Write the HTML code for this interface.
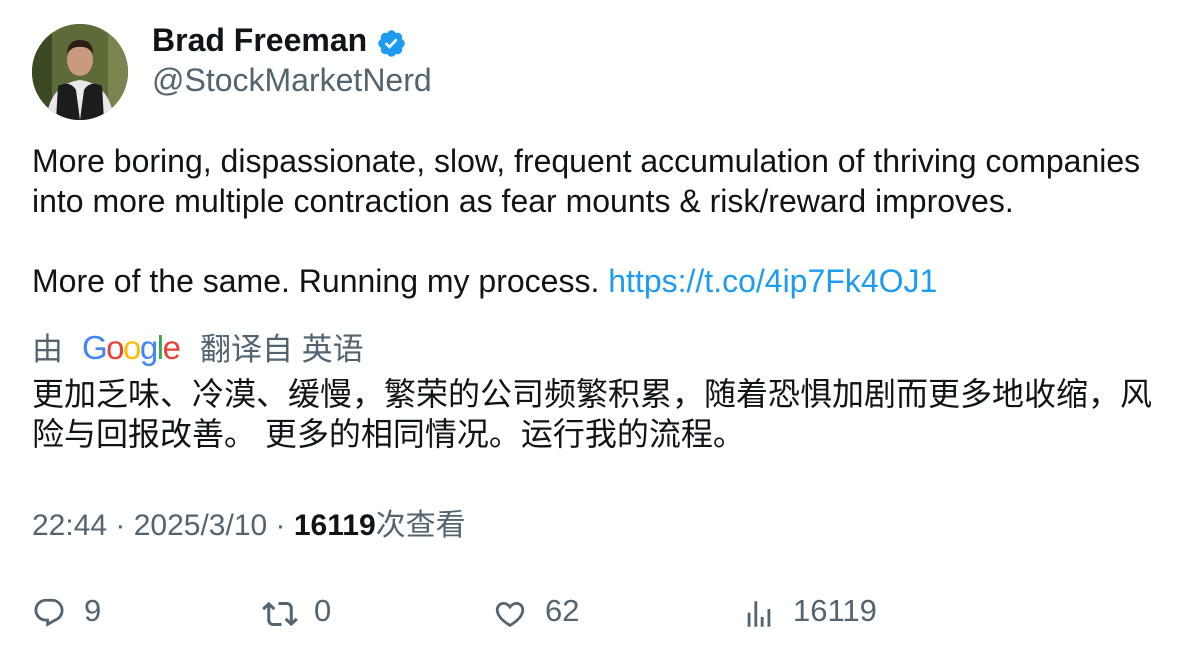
<!DOCTYPE html>
<html><head><meta charset="utf-8"><style>
body{margin:0;width:1196px;height:658px;background:#fff;font-family:"Liberation Sans","Noto Sans CJK SC",sans-serif;color:#0f1419;position:relative;overflow:hidden}
.a{position:absolute;white-space:nowrap}
.g{color:#536471}
</style></head><body>
<div class="a" style="left:32px;top:24px;width:96px;height:96px;border-radius:50%;overflow:hidden;background:#4a5a2e">
<svg width="96" height="96"><rect width="96" height="96" fill="#5d6b38"/><rect x="0" y="0" width="20" height="96" fill="#3b4a22"/><rect x="76" y="0" width="20" height="96" fill="#7a8450"/>
<path d="M14 96 Q18 60 48 56 Q78 60 82 96Z" fill="#e8e8e8"/><path d="M24 96 L26 62 Q38 56 44 66 L48 96Z M72 96 L70 62 Q58 56 52 66 L48 96Z" fill="#1b1d1c"/>
<ellipse cx="48" cy="36" rx="13" ry="16" fill="#c99a7e"/><path d="M35 30 Q36 16 48 16 Q61 16 61 30 Q56 22 48 23 Q40 22 35 30Z" fill="#2a1d16"/></svg></div>
<div class="a" style="left:152px;top:22px;font-size:32px;font-weight:bold">Brad Freeman</div>
<svg class="a" style="left:376px;top:28px" width="31" height="31" viewBox="0 0 24 24"><path fill="#1d9bf0" d="M22.25 12c0-1.43-.88-2.670-2.19-3.34.46-1.39.2-2.9-.81-3.91s-2.52-1.27-3.91-.81c-.66-1.31-1.91-2.190-3.34-2.19s-2.67.88-3.33 2.19c-1.4-.46-2.91-.2-3.92.81s-1.26 2.52-.8 3.91c-1.31.67-2.2 1.91-2.2 3.34s.89 2.67 2.2 3.34c-.46 1.39-.21 2.9.8 3.91s2.52 1.26 3.910.81c.67 1.31 1.91 2.19 3.34 2.19s2.68-.88 3.34-2.19c1.39.45 2.9.2 3.91-.81s1.27-2.52.81-3.91c1.31-.67 2.19-1.91 2.19-3.34z"/><path fill="#fff" d="M10.54 16.2l-3.74-3.74 1.41-1.42 2.26 2.26 4.8-5.23 1.47 1.36z"/></svg>
<div class="a g" style="left:152px;top:62px;font-size:32px">@StockMarketNerd</div>
<div class="a" style="left:32px;top:141px;font-size:32px;line-height:40px">More boring, dispassionate, slow, frequent accumulation of thriving companies<br>into more multiple contraction as fear mounts &amp; risk/reward improves.<br><br>More of the same. Running my process. <span style="color:#1d9bf0">https://t.co/4ip7Fk4OJ1</span></div>
<div class="a g" style="left:32px;top:324px;font-size:31px">由</div>
<div class="a" style="left:82px;top:329px;font-size:33px;letter-spacing:-1.5px"><span style="color:#4285f4">G</span><span style="color:#ea4335">o</span><span style="color:#fbbc05">o</span><span style="color:#4285f4">g</span><span style="color:#34a853">l</span><span style="color:#ea4335">e</span></div>
<div class="a g" style="left:200px;top:324px;font-size:31px">翻译自 英语</div>
<div class="a" style="left:32px;top:374px;font-size:32px;line-height:40px">更加乏味、冷漠、缓慢，繁荣的公司频繁积累，随着恐惧加剧而更多地收缩，风<br>险与回报改善。 更多的相同情况。运行我的流程。</div>
<div class="a g" style="left:32px;top:500px;font-size:30px">22:44 · 2025/3/10 · <b style="color:#0f1419">16119</b>次查看</div>
<svg class="a" style="left:32px;top:596px" width="34" height="34" viewBox="0 0 24 24"><path fill="#536471" d="M1.751 10c0-4.420 3.584-8 8.005-8h4.366c4.49 0 8.129 3.64 8.129 8.13 0 2.96-1.607 5.68-4.196 7.11l-8.054 4.46v-3.69h-.067c-4.49.1-8.183-3.51-8.183-8.01zm8.005-6c-3.317 0-6.005 2.69-6.005 6 0 3.37 2.77 6.08 6.138 6.01l.351-.01h1.761v2.3l5.087-2.81c1.951-1.08 3.163-3.13 3.163-5.36 0-3.39-2.744-6.13-6.129-6.13H9.756z"/></svg>
<div class="a g" style="left:84px;top:593px;font-size:31px">9</div>
<svg class="a" style="left:262px;top:596px" width="36" height="36" viewBox="0 0 24 24"><path fill="#536471" d="M4.5 3.88l4.432 4.14-1.364 1.46L5.5 7.55V16c0 1.1.896 2 2 2H13v2H7.5c-2.209 0-4-1.790-4-4V7.55L1.432 9.48.068 8.02 4.5 3.88zM16.5 6H11V4h5.5c2.209 0 4 1.79 4 4v8.45l2.068-1.93 1.364 1.46-4.432 4.14-4.432-4.14 1.364-1.46 2.068 1.93V8c0-1.1-.896-2-2-2z"/></svg>
<div class="a g" style="left:314px;top:593px;font-size:31px">0</div>
<svg class="a" style="left:493px;top:597px" width="34" height="34" viewBox="0 0 24 24"><path fill="#536471" d="M16.697 5.5c-1.222-.06-2.679.51-3.89 2.16l-.805 1.09-.806-1.09C9.984 6.01 8.526 5.44 7.304 5.5c-1.243.07-2.349.78-2.910 1.91-.552 1.12-.633 2.78.479 4.82 1.074 1.97 3.257 4.27 7.129 6.61 3.870-2.34 6.052-4.64 7.126-6.610 1.111-2.04 1.03-3.7.477-4.82-.561-1.13-1.666-1.84-2.908-1.91zm4.187 7.69c-1.351 2.48-4.001 5.12-8.379 7.67l-.503.3-.504-.3c-4.379-2.55-7.029-5.19-8.382-7.67-1.36-2.5-1.41-4.86-.514-6.67.887-1.79 2.647-2.91 4.601-3.01 1.651-.09 3.368.56 4.798 2.01 1.429-1.45 3.146-2.1 4.796-2.01 1.954.1 3.714 1.22 4.601 3.010.896 1.81.846 4.17-.514 6.67z"/></svg>
<div class="a g" style="left:545px;top:593px;font-size:31px">62</div>
<svg class="a" style="left:742px;top:597px" width="34" height="34" viewBox="0 0 24 24"><path fill="#536471" d="M8.75 21V3h2v18h-2zM18 21V8.5h2V21h-2zM4 21l.004-10h2L6 21H4zm9.248 0v-7h2v7h-2z"/></svg>
<div class="a g" style="left:793px;top:593px;font-size:31px">16119</div>
</body></html>
